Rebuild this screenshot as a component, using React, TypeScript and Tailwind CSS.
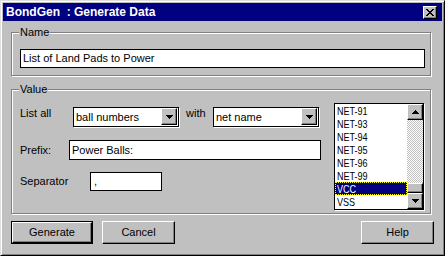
import React from "react";

const raised =
  "border border-t-white border-l-white border-r-black border-b-black shadow-[inset_-1px_-1px_0_#808080]";
const etched =
  "relative border border-[#808080] shadow-[inset_1px_1px_0_#fff,1px_1px_0_#fff]";

function DownArrow() {
  return (
    <svg width="7" height="4" viewBox="0 0 7 4" shapeRendering="crispEdges">
      <path d="M0 0h7v1H0z M1 1h5v1H1z M2 2h3v1H2z M3 3h1v1H3z" fill="#000" />
    </svg>
  );
}
function UpArrow() {
  return (
    <svg width="7" height="4" viewBox="0 0 7 4" shapeRendering="crispEdges">
      <path d="M3 0h1v1H3z M2 1h3v1H2z M1 2h5v1H1z M0 3h7v1H0z" fill="#000" />
    </svg>
  );
}

function Combo({ value }: { value: string }) {
  return (
    <div className="w-[106px] h-[20px] bg-white border border-black shadow-[1px_1px_0_#fff] flex items-start">
      <span className="flex-1 pl-[2px] pt-[3px] whitespace-nowrap">{value}</span>
      <div className={`w-[16px] h-[17px] mr-[1px] bg-[#c0c0c0] flex items-center justify-center ${raised}`}>
        <DownArrow />
      </div>
    </div>
  );
}

function Group({ label, className, children }: { label: string; className: string; children: React.ReactNode }) {
  return (
    <div className={`${etched} ${className}`}>
      <span className="absolute left-[7px] top-[-7px] px-[1px] bg-[#c0c0c0] leading-[13px]">{label}</span>
      {children}
    </div>
  );
}

const items = ["NET-91", "NET-93", "NET-94", "NET-95", "NET-96", "NET-99", "VCC", "VSS"];

export default function App() {
  return (
    <div className="w-[445px] h-[256px] bg-[#c0c0c0] border border-t-[#dfdfdf] border-l-[#dfdfdf] border-r-black border-b-black shadow-[inset_1px_1px_0_#fff,inset_-1px_-1px_0_#808080] p-[2px] font-['Liberation_Sans',Arial,sans-serif] text-[11px] leading-[13px] text-black select-none overflow-hidden">
      <div className="h-[18px] bg-[#000080] flex items-center justify-between pl-[3px] pr-[5px]">
        <span className="text-white font-bold text-[12px] whitespace-pre">BondGen  : Generate Data</span>
        <div className={`w-[14px] h-[13px] bg-[#c0c0c0] flex items-center justify-center ${raised}`}>
          <svg width="8" height="7" viewBox="0 0 8 7" shapeRendering="crispEdges">
            <path
              d="M0 0h2v1H0z M1 1h2v1H1z M2 2h1v1H2z M3 2h2v1H3z M5 2h1v1H5z M5 1h2v1H5z M6 0h2v1H6z M3 3h2v1H3z M2 4h4v1H2z M1 5h2v1H1z M5 5h2v1H5z M0 6h2v1H0z M6 6h2v1H6z"
              fill="#000"
            />
          </svg>
        </div>
      </div>

      <div className="pl-[8px]">
        <Group label="Name" className="mt-[11px] w-[420px] h-[44px] pl-[8px] pt-[16px]">
          <div className="w-[405px] h-[19px] bg-white border border-black pl-[2px] pt-[2px] whitespace-nowrap">
            List of Land Pads to Power
          </div>
        </Group>

        <Group label="Value" className="mt-[13px] w-[420px] h-[125px] pl-[8px] flex">
          <div className="w-[314px] pt-[17px] flex flex-col">
            <div className="flex items-center h-[20px]">
              <span className="w-[53px] mb-[7px]">List all</span>
              <Combo value="ball numbers" />
              <span className="w-[34px] pl-[7px] mb-[7px]">with</span>
              <Combo value="net name" />
            </div>
            <div className="flex items-center h-[20px] mt-[13px]">
              <span className="w-[49px]">Prefix:</span>
              <div className="w-[252px] h-[20px] bg-white border border-black pl-[2px] pt-[3px] whitespace-nowrap">
                Power Balls:
              </div>
            </div>
            <div className="flex items-center h-[19px] mt-[12px]">
              <span className="w-[70px]">Separator</span>
              <div className="w-[72px] h-[19px] bg-white border border-black pl-[3px] pt-[2px]">,</div>
            </div>
          </div>

          <div className="mt-[13px] w-[90px] h-[107px] bg-white border border-black shadow-[1px_1px_0_#fff] flex">
            <div className="flex-1 flex flex-col">
              {items.map((it) => {
                const sel = it === "VCC";
                return (
                  <div
                    key={it}
                    className={
                      sel
                        ? "h-[13px] bg-[#000080] text-white outline-1 outline-dotted outline-[#ffff00] -outline-offset-1 pl-[2px] overflow-hidden flex items-center"
                        : "h-[13px] pl-[2px] overflow-hidden flex items-center"
                    }
                  >
                    <span className="inline-block text-[11px] leading-[12px] scale-x-[0.82] origin-left whitespace-nowrap">
                      {it}
                    </span>
                  </div>
                );
              })}
            </div>
            <div className="w-[16px] flex flex-col">
              <div className={`h-[16px] bg-[#c0c0c0] flex items-center justify-center ${raised}`}>
                <UpArrow />
              </div>
              <div className="flex-1 bg-[repeating-conic-gradient(#c0c0c0_0%_25%,#ffffff_0%_50%)] bg-[length:2px_2px] flex flex-col justify-end">
                <div className={`h-[10px] bg-[#c0c0c0] ${raised}`} />
              </div>
              <div className={`h-[16px] bg-[#c0c0c0] flex items-center justify-center ${raised}`}>
                <DownArrow />
              </div>
            </div>
          </div>
        </Group>

        <div className="mt-[7px] flex pr-[8px]">
          <div className="w-[82px] h-[23px] border border-black">
            <div className={`w-full h-full bg-[#c0c0c0] flex items-center justify-center ${raised}`}>Generate</div>
          </div>
          <div className={`ml-[9px] w-[73px] h-[23px] bg-[#c0c0c0] flex items-center justify-center ${raised}`}>
            Cancel
          </div>
          <div className={`ml-auto w-[73px] h-[23px] bg-[#c0c0c0] flex items-center justify-center ${raised}`}>
            Help
          </div>
        </div>
      </div>
    </div>
  );
}
